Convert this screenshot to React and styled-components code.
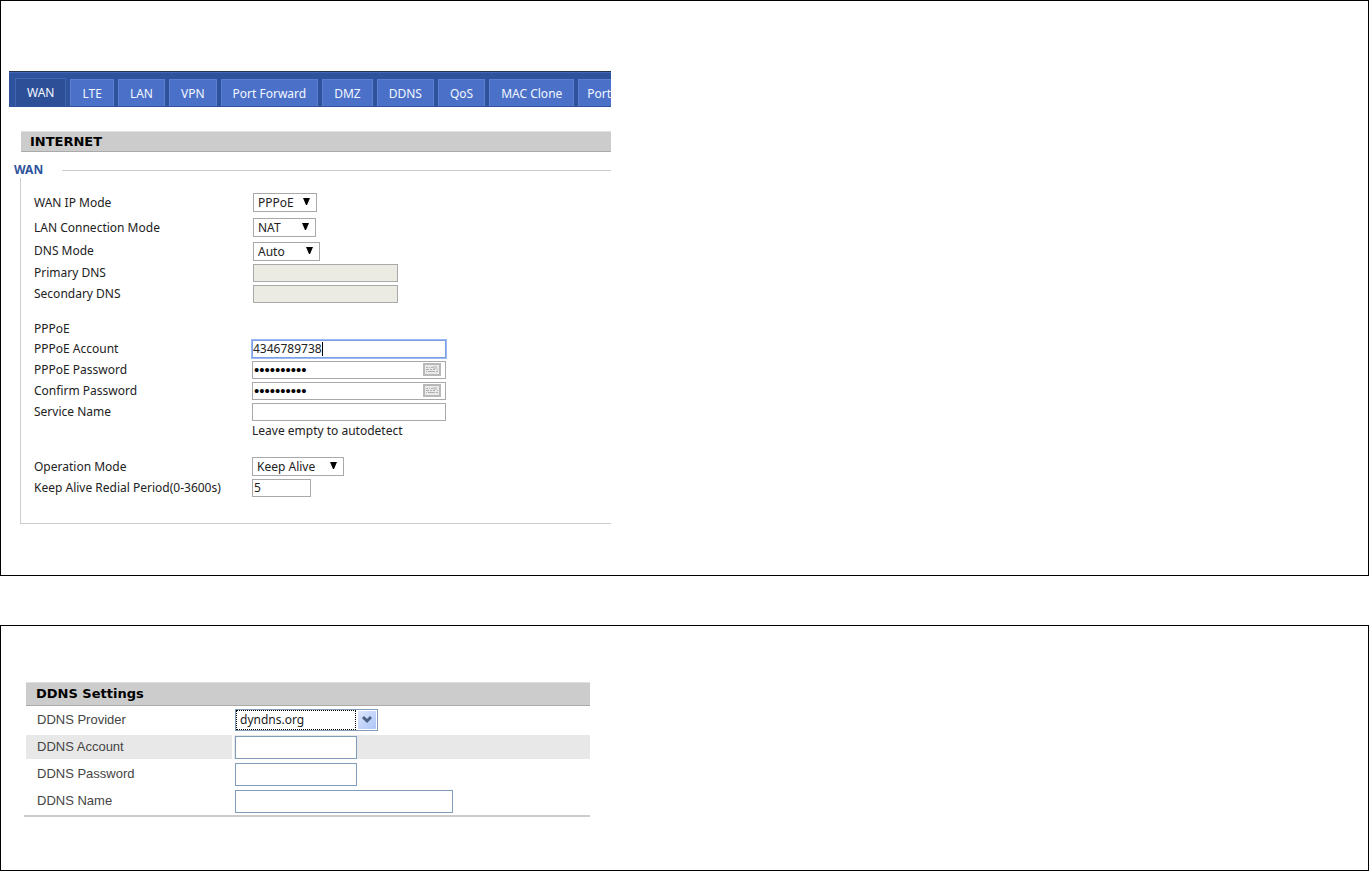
import React, { useState } from "react";
import styled, { createGlobalStyle } from "styled-components";


const TABS = ["WAN", "LTE", "LAN", "VPN", "Port Forward", "DMZ", "DDNS", "QoS", "MAC Clone", "Port"];


const Dropdown = ({ id, width, options }) => (
   <SelectWrap $width={width}>
      <Select id={id}>
         {options.map((o) => (
            <option key={o}>{o}</option>
         ))}
      </Select>
      <Arrow viewBox="0 0 7 7" aria-hidden="true">
         <path d="M0 0h7L4 7H3z" fill="#000" />
      </Arrow>
   </SelectWrap>
);

const Password = ({ id }) => (
   <Box $width={194}>
      <BareInput id={id} type="password" defaultValue="4346789738" />
      <Keyboard viewBox="0 0 18 13" aria-hidden="true">
         <rect x="1" y="1" width="16" height="11" fill="#e9e9e9" stroke="#b9b9b9" strokeWidth="2" />
         <path
            d="M3 4.5h2M6 4.5h1M8 4.5h2M11 3v3M13 3v3M3 6.5h3M7 6.5h2M10 6.5h2M14 6.5h1M3 8.5h1M5 8.5h7M13 8.5h2"
            stroke="#b0b0b0"
         />
      </Keyboard>
   </Box>
);

const App = () => {
   const [tab, setTab] = useState("WAN");

   return (
      <>
         <GlobalStyle />
         <Card $top={70} $bottom={51}>
            <WanPanel>
               <TabBar>
                  {TABS.map((name) => (
                     <Tab key={name} type="button" $active={tab === name} onClick={() => setTab(name)}>
                        {name}
                     </Tab>
                  ))}
               </TabBar>
               <Title>INTERNET</Title>
               <Group>
                  <Legend>WAN</Legend>
                  <Rows $label={219}>
                     <Row $height={25}>
                        <label htmlFor="wanMode">WAN IP Mode</label>
                        <Dropdown id="wanMode" width={64} options={["PPPoE", "DHCP", "Static"]} />
                     </Row>
                     <Row $height={25}>
                        <label htmlFor="lanMode">LAN Connection Mode</label>
                        <Dropdown id="lanMode" width={63} options={["NAT", "Bridge"]} />
                     </Row>
                     <Row $height={22}>
                        <label htmlFor="dnsMode">DNS Mode</label>
                        <Dropdown id="dnsMode" width={67} options={["Auto", "Manual"]} />
                     </Row>
                     <Row>
                        <label htmlFor="dns1">Primary DNS</label>
                        <Input id="dns1" $width={145} disabled />
                     </Row>
                     <Row>
                        <label htmlFor="dns2">Secondary DNS</label>
                        <Input id="dns2" $width={145} disabled />
                     </Row>
                  </Rows>

                  <Rows $label={218}>
                     <Row $height={18}>
                        <span>PPPoE</span>
                     </Row>
                     <Row>
                        <label htmlFor="account">PPPoE Account</label>
                        <Box $width={194} $focused>
                           <FitInput id="account" defaultValue="4346789738" />
                           <Caret />
                        </Box>
                     </Row>
                     <Row>
                        <label htmlFor="pass">PPPoE Password</label>
                        <Password id="pass" />
                     </Row>
                     <Row>
                        <label htmlFor="pass2">Confirm Password</label>
                        <Password id="pass2" />
                     </Row>
                     <Row>
                        <label htmlFor="service">Service Name</label>
                        <Input id="service" $width={194} />
                     </Row>
                     <Row $height={18}>
                        <Hint>Leave empty to autodetect</Hint>
                     </Row>
                  </Rows>

                  <Rows $label={218}>
                     <Row>
                        <label htmlFor="operation">Operation Mode</label>
                        <Dropdown id="operation" width={92} options={["Keep Alive", "On Demand", "Manual"]} />
                     </Row>
                     <Row>
                        <label htmlFor="redial">Keep Alive Redial Period(0-3600s)</label>
                        <Input id="redial" $width={59} defaultValue="5" />
                     </Row>
                  </Rows>
               </Group>
            </WanPanel>
         </Card>

         <Card $top={56} $bottom={53}>
            <DdnsPanel>
               <DdnsTitle>DDNS Settings</DdnsTitle>
               <DdnsRow>
                  <DdnsLabel htmlFor="provider">DDNS Provider</DdnsLabel>
                  <DdnsField>
                     <XpSelectWrap>
                        <XpSelect id="provider">
                           <option>dyndns.org</option>
                           <option>freedns.afraid.org</option>
                           <option>www.zoneedit.com</option>
                           <option>www.no-ip.com</option>
                        </XpSelect>
                        <XpArrow viewBox="0 0 18 18" aria-hidden="true">
                           <defs>
                              <linearGradient id="xp" x1="0" y1="0" x2="1" y2="1">
                                 <stop offset="0" stopColor="#dce6fd" />
                                 <stop offset="1" stopColor="#adc4f7" />
                              </linearGradient>
                           </defs>
                           <rect width="18" height="18" rx="1" fill="url(#xp)" />
                           <path d="M5 6l4 4 4-4" fill="none" stroke="#4d6185" strokeWidth="3" />
                        </XpArrow>
                     </XpSelectWrap>
                  </DdnsField>
               </DdnsRow>
               <DdnsRow $shaded>
                  <DdnsLabel htmlFor="ddnsAccount">DDNS Account</DdnsLabel>
                  <DdnsField>
                     <XpInput id="ddnsAccount" $width={122} />
                  </DdnsField>
               </DdnsRow>
               <DdnsRow>
                  <DdnsLabel htmlFor="ddnsPass">DDNS Password</DdnsLabel>
                  <DdnsField>
                     <XpInput id="ddnsPass" type="password" $width={122} />
                  </DdnsField>
               </DdnsRow>
               <DdnsRow>
                  <DdnsLabel htmlFor="ddnsName">DDNS Name</DdnsLabel>
                  <DdnsField>
                     <XpInput id="ddnsName" $width={218} />
                  </DdnsField>
               </DdnsRow>
            </DdnsPanel>
         </Card>
      </>
   );
};

export default App;



const GlobalStyle = createGlobalStyle`
   * {
      box-sizing: border-box;
   }
   body {
      margin: 0;
      background: #fff;
      color: #222;
      font-family: "Noto Sans", "Open Sans", sans-serif;
      font-size: 12px;
      line-height: 16px;
   }
   input, select, button {
      font: inherit;
      color: inherit;
      margin: 0;
      border-radius: 0;
   }
`;

const Card = styled.section`
   border: 1px solid #000;
   padding: ${(p) => p.$top}px 8px ${(p) => p.$bottom}px;

   & + & {
      margin-top: 49px;
   }
`;

const WanPanel = styled.div`
   max-width: 602px;
   overflow: hidden;
`;

const TabBar = styled.nav`
   display: flex;
   align-items: flex-end;
   gap: 4px;
   height: 36px;
   padding: 0 6px 1px;
   background: #2f529d;
   border-top: 1px solid #24364f;
   box-shadow: inset 0 1px #4167b8;
`;

const Tab = styled.button`
   flex: none;
   height: ${(p) => (p.$active ? 28 : 27)}px;
   padding: ${(p) => (p.$active ? 0 : 1)}px 11px 0;
   border: 1px solid ${(p) => (p.$active ? "#4165b0" : "#5c7fd0")};
   border-bottom: 0;
   background: ${(p) => (p.$active ? "#2d4f98" : "#4a70c8")};
   color: #f4f7ff;
   cursor: pointer;

   &:last-child {
      padding-left: 8px;
   }
`;

const Title = styled.h2`
   height: 21px;
   margin: 24px 0 10px 12px;
   padding-left: 9px;
   border-top: 1px solid #e0e0e0;
   border-bottom: 1px solid #aaa;
   background: #ccc;
   color: #000;
   font: bold 13px/20px "DejaVu Sans", sans-serif;
`;

const Group = styled.fieldset`
   min-width: 0;
   margin: 0 0 0 11px;
   padding: 12px 0 25px 13px;
   border: 1px solid #ccc;
   border-right: 0;
`;

const Legend = styled.legend`
   margin-left: -21px;
   padding: 0 19px 0 1px;
   background: #fff;
   color: #2f529d;
   font-weight: bold;
`;

const Rows = styled.div`
   --label: ${(p) => p.$label}px;

   & + & {
      margin-top: 16px;
   }
`;

const Row = styled.div`
   display: grid;
   grid-template-columns: var(--label) auto;
   align-items: center;
   justify-content: start;
   height: ${(p) => p.$height || 21}px;
`;

const Hint = styled.span`
   grid-column: 2;
`;

const SelectWrap = styled.span`
   position: relative;
   display: flex;
   width: ${(p) => p.$width}px;
`;

const Select = styled.select`
   appearance: none;
   width: 100%;
   height: 19px;
   padding: 0 4px;
   border: 1px solid #a9a9a9;
   background: #fff;
   line-height: 17px;
`;

const Arrow = styled.svg`
   position: absolute;
   top: 5px;
   right: 7px;
   width: 7px;
   height: 7px;
   pointer-events: none;
`;

const Input = styled.input`
   width: ${(p) => p.$width}px;
   height: 18px;
   padding: 0 1px;
   border: 1px solid #a9a9a9;
   background: #fff;

   &:disabled {
      background: #ebebe4;
   }
`;

const Box = styled.span`
   display: flex;
   align-items: center;
   width: ${(p) => p.$width}px;
   height: 18px;
   border: 1px solid ${(p) => (p.$focused ? "#7a9fe6" : "#a9a9a9")};
   box-shadow: ${(p) => (p.$focused ? "0 0 0 1px #9dbaf0" : "none")};
   background: #fff;
`;

const BareInput = styled.input`
   flex: 1;
   min-width: 0;
   height: 16px;
   padding: 0 1px;
   border: 0;
   outline: 0;
   background: none;
   color: #000;
   font: 15px/16px "Liberation Sans", Arial, sans-serif;
`;

const FitInput = styled.input`
   field-sizing: content;
   height: 16px;
   padding: 0;
   border: 0;
   outline: 0;
   background: none;
   caret-color: transparent;
`;

const Caret = styled.span`
   width: 1px;
   height: 14px;
   background: #000;
`;

const Keyboard = styled.svg`
   flex: none;
   width: 18px;
   height: 13px;
   margin-right: 4px;
`;

const DdnsPanel = styled.div`
   display: flex;
   flex-direction: column;
   gap: 4px;
   max-width: 566px;
   margin-left: 15px;
   padding-bottom: 3px;
   border-bottom: 2px solid #ccc;
   color: #444;
   font-family: "Liberation Sans", Arial, sans-serif;
   font-size: 13px;
`;

const DdnsTitle = styled.h2`
   height: 24px;
   margin: 0 0 -2px 2px;
   padding-left: 10px;
   border-top: 1px solid #e0e0e0;
   border-bottom: 1px solid #aaa;
   background: #ccc;
   color: #000;
   font: bold 13px/22px "DejaVu Sans", sans-serif;
`;

const DdnsRow = styled.div`
   display: grid;
   grid-template-columns: 206px 1fr;
   gap: 2px;
   height: 23px;
   margin-left: 2px;

   & > * {
      background: ${(p) => (p.$shaded ? "#e8e8e8" : "none")};
   }
`;

const DdnsLabel = styled.label`
   padding-left: 11px;
   line-height: 24px;
`;

const DdnsField = styled.div`
   display: flex;
   align-items: center;
   padding-left: 1px;
`;

const XpInput = styled.input`
   width: ${(p) => p.$width}px;
   height: 23px;
   padding: 0 3px;
   border: 1px solid #7f9db9;
   background: #fff;
`;

const XpSelectWrap = styled.span`
   position: relative;
   display: flex;
   width: 143px;
   height: 22px;
   padding-right: 21px;
   border: 1px solid #7f9db9;
`;

const XpSelect = styled.select`
   appearance: none;
   width: 100%;
   height: 20px;
   padding: 0 3px;
   border: 1px dotted #000;
   background: #fff;
   color: #222;
   font: 12px/18px "Noto Sans", sans-serif;
`;

const XpArrow = styled.svg`
   position: absolute;
   top: 1px;
   right: 1px;
   width: 18px;
   height: 18px;
   pointer-events: none;
`;
